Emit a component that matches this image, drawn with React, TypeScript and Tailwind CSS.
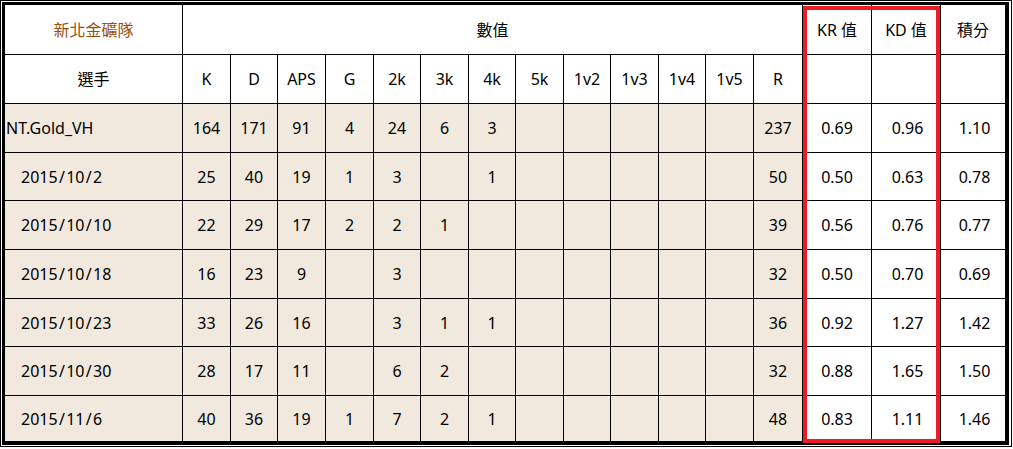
import React from "react";

type Row = { name: string; indent: boolean; v: string[]; kr: string; kd: string; score: string };

const rows: Row[] = [
  { name: "NT.Gold_VH", indent: false, v: ["164", "171", "91", "4", "24", "6", "3", "", "", "", "", "", "237"], kr: "0.69", kd: "0.96", score: "1.10" },
  { name: "2015/10/2", indent: true, v: ["25", "40", "19", "1", "3", "", "1", "", "", "", "", "", "50"], kr: "0.50", kd: "0.63", score: "0.78" },
  { name: "2015/10/10", indent: true, v: ["22", "29", "17", "2", "2", "1", "", "", "", "", "", "", "39"], kr: "0.56", kd: "0.76", score: "0.77" },
  { name: "2015/10/18", indent: true, v: ["16", "23", "9", "", "3", "", "", "", "", "", "", "", "32"], kr: "0.50", kd: "0.70", score: "0.69" },
  { name: "2015/10/23", indent: true, v: ["33", "26", "16", "", "3", "1", "1", "", "", "", "", "", "36"], kr: "0.92", kd: "1.27", score: "1.42" },
  { name: "2015/10/30", indent: true, v: ["28", "17", "11", "", "6", "2", "", "", "", "", "", "", "32"], kr: "0.88", kd: "1.65", score: "1.50" },
  { name: "2015/11/6", indent: true, v: ["40", "36", "19", "1", "7", "2", "1", "", "", "", "", "", "48"], kr: "0.83", kd: "1.11", score: "1.46" },
];

const heads = ["K", "D", "APS", "G", "2k", "3k", "4k", "5k", "1v2", "1v3", "1v4", "1v5", "R"];

const W = "bg-white flex items-center justify-center";
const B = "bg-[#f1e9de] flex items-center justify-center";

function Name({ text }: { text: string }) {
  const parts = text.split("/");
  return (
    <span>
      {parts.map((p, i) => (
        <React.Fragment key={i}>
          {i > 0 && <span className="inline-block w-[8.6px] text-center">/</span>}
          {p}
        </React.Fragment>
      ))}
    </span>
  );
}

export default function App() {
  return (
    <div
      className="relative w-[1013px] h-[449px] bg-white text-black text-[16px] leading-none"
      style={{ fontFamily: '"Noto Sans", "Noto Sans CJK TC", sans-serif' }}
    >
      <div className="w-[1012px] h-[447px] border border-black bg-white pt-px pl-px pr-[2px] pb-px">
        <div className="w-full h-full border-l-[3px] border-t-[3px] border-r-4 border-b-4 border-black">
          <div className="grid h-full w-full gap-px bg-black grid-cols-[177px_47px_46px_47px_47px_46px_47px_46px_47px_46px_47px_46px_47px_48px_68px_68px_64px] grid-rows-[49px_48px_48px_47px_48px_48px_47px_48px_45px]">
            <div className={`${W} text-[#9a4f0e]`}>新北金礦隊</div>
            <div className={`${W} col-span-13`}>數值</div>
            <div className={W}>KR 值</div>
            <div className={W}>KD 值</div>
            <div className={W}>積分</div>

            <div className={W}>選手</div>
            {heads.map((h) => (
              <div key={h} className={W}>{h}</div>
            ))}
            <div className={W}></div>
            <div className={W}></div>
            <div className={W}></div>

            {rows.map((r) => (
              <React.Fragment key={r.name}>
                <div className={`bg-[#f1e9de] flex items-center ${r.indent ? "pl-4" : "pl-px"}`}>
                  <Name text={r.name} />
                </div>
                {r.v.map((x, i) => (
                  <div key={i} className={B}>{x}</div>
                ))}
                <div className={W}>{r.kr}</div>
                <div className={`${W} pl-[3px]`}>{r.kd}</div>
                <div className={`${W} pl-[3px]`}>{r.score}</div>
              </React.Fragment>
            ))}
          </div>
        </div>
      </div>
      <div className="absolute left-[803px] top-[6px] w-[137px] h-[437px] border-4 border-[#ed1c24]"></div>
    </div>
  );
}
